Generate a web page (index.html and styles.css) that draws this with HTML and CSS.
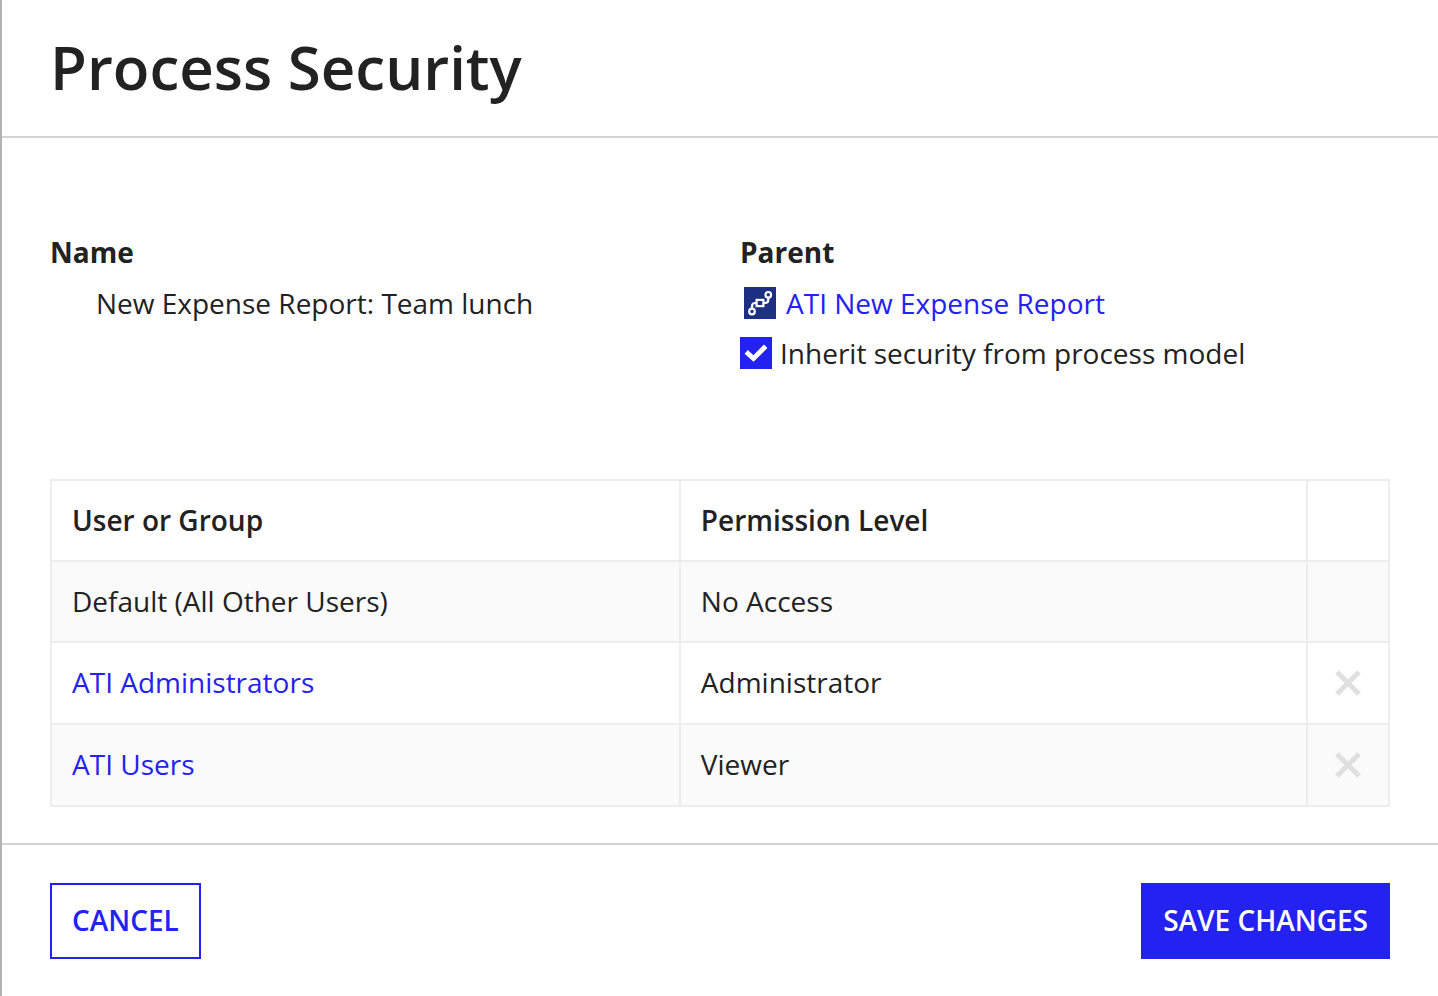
FILE: index.html
```html
<!DOCTYPE html>
<html lang="en">
<head>
<meta charset="utf-8">
<title>Process Security</title>
<link rel="stylesheet" href="styles.css">
</head>
<body>
<main class="dialog">
  <header class="dialog-header"><h1 class="title">Process Security</h1></header>
  <form class="dialog-form">
    <div class="content">
      <section class="details">
        <div class="field">
          <h2 class="label">Name</h2>
          <p class="name-value">New Expense Report: Team lunch</p>
        </div>
        <div class="field">
          <h2 class="label">Parent</h2>
          <a class="parent-link" href="#model">
            <svg class="model-icon" viewBox="0 0 32 32" aria-hidden="true">
              <rect width="32" height="32" fill="#1c2f83"/>
              <g fill="none" stroke="#fff" stroke-width="2.2">
                <circle cx="8" cy="24.500" r="2.800"/>
                <rect x="12.600" y="12.900" width="6.800" height="6.200"/>
                <circle cx="24.300" cy="7.800" r="2.800"/>
                <path d="M8 21.500v-2q0-3.500 3-3.500h2M19 16h2q3.300 0 3.300-3.500v-2"/>
              </g>
            </svg>
            <span>ATI New Expense Report</span>
          </a>
          <label class="inherit" for="inherit">
            <span class="check">
              <input class="check-input" type="checkbox" id="inherit" checked>
              <svg class="check-mark" viewBox="0 0 32 32" aria-hidden="true"><path d="M8 16.500l5.500 5L24 11" fill="none" stroke="#fff" stroke-width="4.800" stroke-linecap="square"/></svg>
            </span>
            <span>Inherit security from process model</span>
          </label>
        </div>
      </section>
      <table class="grid">
        <colgroup><col class="col-user"><col class="col-level"><col class="col-remove"></colgroup>
        <thead><tr><th scope="col">User or Group</th><th scope="col">Permission Level</th><td></td></tr></thead>
        <tbody>
          <tr><td>Default (All Other Users)</td><td>No Access</td><td></td></tr>
          <tr><td><a href="#admins">ATI Administrators</a></td><td>Administrator</td><td class="remove-cell"><button class="remove" type="button" aria-label="Remove ATI Administrators" disabled><svg class="remove-icon" viewBox="0 0 26 26" aria-hidden="true"><path d="M2 2l22 22M24 2L2 24"/></svg></button></td></tr>
          <tr><td><a href="#users">ATI Users</a></td><td>Viewer</td><td class="remove-cell"><button class="remove" type="button" aria-label="Remove ATI Users" disabled><svg class="remove-icon" viewBox="0 0 26 26" aria-hidden="true"><path d="M2 2l22 22M24 2L2 24"/></svg></button></td></tr>
        </tbody>
      </table>
    </div>
    <footer class="actions">
      <button class="button" type="button">CANCEL</button>
      <button class="button button-primary" type="submit">SAVE CHANGES</button>
    </footer>
  </form>
</main>
</body>
</html>
```
FILE: styles.css
```css
* { box-sizing: border-box; }
body { margin: 0; background: #fff; color: #222; font: 28px/40px "Open Sans", sans-serif; }
a { color: #2322f0; text-decoration: none; }
.dialog { min-height: 100vh; border-left: 2px solid #b3b3b3; }
.dialog-header { padding: 27px 48px 29px; border-bottom: 2px solid #d3d3d3; }
.title { margin: 0; font-size: 60px; line-height: 80px; font-weight: 600; }
.content { padding: 94px 48px 36px; }
.details { display: grid; grid-template-columns: 1fr 1fr; gap: 40px; }
.label { margin: 0 0 11px; font-size: 28px; line-height: 40px; font-weight: 700; }
.name-value { margin: 0; padding-left: 46px; }
.parent-link { display: flex; align-items: center; gap: 10px; padding-left: 4px; }
.model-icon { width: 32px; height: 32px; }
.inherit { display: flex; align-items: center; gap: 8px; margin-top: 10px; }
.check { display: grid; width: 32px; height: 32px; }
.check-input { grid-area: 1 / 1; appearance: none; width: 32px; height: 32px; margin: 0; border: 2px solid #2322f0; }
.check-input:checked { background: #2322f0; }
.check-mark { grid-area: 1 / 1; width: 32px; height: 32px; pointer-events: none; }
.grid { width: 100%; margin-top: 106px; border-collapse: collapse; table-layout: fixed; }
.col-user { width: 47%; }
.col-remove { width: 82px; }
.grid th, .grid td { height: 81px; padding: 0 20px 2px; border: 2px solid #ededed; text-align: left; }
.grid th { font-weight: 600; }
.grid tbody tr:nth-child(odd) { background: #fafafa; }
.grid .remove-cell { height: 82px; padding: 0; text-align: center; }
.remove { display: block; margin: 0 auto; padding: 0; border: 0; background: none; }
.remove-icon { display: block; width: 26px; height: 26px; fill: none; stroke: #e0e0e0; stroke-width: 5; }
.actions { display: flex; justify-content: space-between; padding: 38px 48px 36px; border-top: 2px solid #d3d3d3; }
.button { height: 76px; padding: 0 20px 2px; border: 2px solid #2322f0; background: #fff; color: #2322f0; font: 600 28px/40px "Open Sans", sans-serif; }
.button-primary { background: #2322f0; color: #fff; }
```
